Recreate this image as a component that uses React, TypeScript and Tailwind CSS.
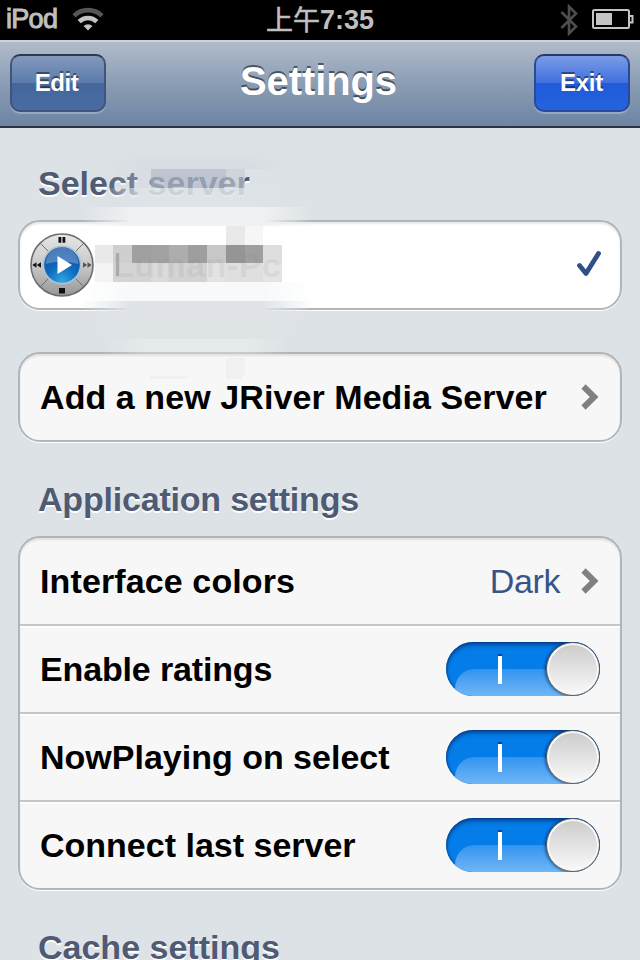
import React from 'react';

interface SettingsRowProps {
  label: string;
  first?: boolean;
  tracking?: string;
  children?: React.ReactNode;
}

const StatusBar: React.FC = () => (
  <div className="grid h-10 grid-cols-3 items-center bg-black text-[27px] leading-none font-bold text-[#bfbfbf]">
    <div className="flex items-center gap-[13px] pb-[2px] pl-[6px]">
      <span className="w-[53px] text-[27px] font-normal tracking-[-0.7px] [-webkit-text-stroke:1px_#bfbfbf]">iPod</span>
      <svg width="32" height="24" viewBox="0 0 32 24">
        <path d="M2 8.8 A20 20 0 0 1 30 8.8" fill="none" stroke="#555" strokeWidth="4.6" />
        <path d="M7.2 14.6 A12.4 12.4 0 0 1 24.8 14.6" fill="none" stroke="#c4c4c4" strokeWidth="4.6" />
        <path d="M11.6 19 A6.6 6.6 0 0 1 20.4 19 L16 23.6Z" fill="#c4c4c4" />
      </svg>
    </div>
    <div className="flex items-center justify-center">
      <span className="mb-[3px] font-['Noto_Sans_CJK_SC',sans-serif] text-[27px] font-normal [-webkit-text-stroke:0.6px_#bfbfbf]">
        上午
      </span>
      <span>7:35</span>
    </div>
    <div className="flex items-center justify-end gap-[14px] pr-[6px]">
      <svg width="18" height="32" viewBox="0 0 18 32">
        <path d="M1.5 8 L16 22.5 L9 29.5 V2.5 L16 9.5 L1.5 24" fill="none" stroke="#4e4e4e" strokeWidth="2.6" />
      </svg>
      <svg className="-mt-[2px]" width="42" height="20" viewBox="0 0 42 20">
        <rect x="1" y="1" width="36" height="18" rx="1.5" fill="none" stroke="#c4c4c4" strokeWidth="2" />
        <rect x="4" y="4" width="16" height="12" fill="#c4c4c4" />
        <path d="M37 7 H40.5 V13.5 H37" fill="none" stroke="#c4c4c4" strokeWidth="2" />
      </svg>
    </div>
  </div>
);

const NavBar: React.FC = () => (
  <div className="flex h-[88px] items-start justify-between border-t-2 border-b-2 border-t-[#cbd3dc] border-b-[#2d3440] bg-gradient-to-b from-[#b0bccb] via-[#8b9db4] to-[#6d84a4] px-[10px] pt-3 text-white">
    <button className="h-[58px] w-24 rounded-[10px] border-2 border-[#40557a] border-t-[#30394b] bg-[linear-gradient(#8299bd_0%,#5c7bab_50%,#44669c_51%,#486ca3_100%)] pr-[3px] text-2xl font-bold tracking-[-0.4px] shadow-[0_2px_0_rgba(255,255,255,0.25)] [text-shadow:0_-2px_0_rgba(0,0,0,0.45)]">
      Edit
    </button>
    <div className="-mt-[2px] text-[40px] leading-[58px] font-bold tracking-[-0.1px] [text-shadow:0_-2px_0_rgba(0,0,0,0.5)]">
      <span className="mr-[3px]">Settings</span>
    </div>
    <button className="h-[58px] w-24 rounded-[10px] border-2 border-[#2b4a96] border-t-[#2b3964] bg-[linear-gradient(#7b9be6_0%,#3f70de_50%,#205ad9_51%,#2463e0_100%)] pr-px text-2xl font-bold tracking-[-0.3px] shadow-[0_2px_0_rgba(255,255,255,0.25)] [text-shadow:0_-2px_0_rgba(0,0,0,0.45)]">
      Exit
    </button>
  </div>
);

const SectionTitle: React.FC<{ className?: string; children: React.ReactNode }> = ({ className = '', children }) => (
  <h2 className={`pl-5 text-[34px] leading-10 font-bold text-[#4f5a73] [text-shadow:0_2px_0_#fff] ${className}`}>
    {children}
  </h2>
);

const Card: React.FC<{ className?: string; children: React.ReactNode }> = ({ className = '', children }) => (
  <div
    className={`overflow-hidden rounded-[22px] border-2 border-[#afb5b9] shadow-[0_1px_0_#fff,inset_0_2px_2px_rgba(0,0,0,0.09)] ${className}`}
  >
    {children}
  </div>
);

const SettingsRow: React.FC<SettingsRowProps> = ({ label, first, tracking = '', children }) => (
  <div
    className={`flex items-center justify-between pr-5 pl-5 text-[34px] leading-10 ${
      first ? 'h-[86px]' : 'h-[88px] border-t-2 border-[#c5c6c7] shadow-[inset_0_2px_0_#fff]'
    }`}
  >
    <span className={`font-bold whitespace-nowrap text-black ${tracking}`}>{label}</span>
    {children}
  </div>
);

const Chevron: React.FC = () => (
  <svg className="mr-px" width="18" height="26" viewBox="0 0 18 26">
    <path d="M2.5 2.5 L13.2 13 L2.5 23.5" fill="none" stroke="#808080" strokeWidth="6" />
  </svg>
);

const Toggle: React.FC = () => (
  <div className="relative h-[54px] w-[154px] overflow-hidden rounded-full bg-[#047de9] shadow-[inset_0_3px_4px_rgba(0,20,80,0.5),inset_0_0_2px_1px_rgba(0,40,120,0.4)]">
    <div className="absolute top-[27px] left-[9px] h-[54px] w-[136px] rounded-[20px] bg-gradient-to-b from-[#3094ee] to-[#6eb6f7] to-50%" />
    <div className="absolute top-[14px] left-[52px] h-[28px] w-1 bg-white shadow-[0_-2px_0_rgba(0,40,110,0.6)]" />
    <div className="absolute top-0 right-0 size-[54px] rounded-full border border-[#5c5c5c] bg-gradient-to-b from-[#cbcbcb] to-[#fafafa] shadow-[-1px_0_3px_rgba(0,30,90,0.7),inset_0_0_0_2px_#f8f8f8]" />
  </div>
);

const ServerIcon: React.FC = () => (
  <svg width="64" height="64" viewBox="0 0 64 64">
    <defs>
      <linearGradient id="ring" x1="0" y1="0" x2="0" y2="1">
        <stop offset="0" stopColor="#e6e6e6" />
        <stop offset="0.5" stopColor="#c9c9c9" />
        <stop offset="1" stopColor="#969696" />
      </linearGradient>
      <radialGradient id="disc" cx="0.5" cy="0.95" r="0.85">
        <stop offset="0" stopColor="#2fa6e6" />
        <stop offset="0.5" stopColor="#0f6cbd" />
        <stop offset="1" stopColor="#1450a0" />
      </radialGradient>
    </defs>
    <circle cx="32" cy="32" r="31" fill="url(#ring)" stroke="#6c6c6c" strokeWidth="1.6" />
    <path d="M10 10 L54 54 M54 10 L10 54" stroke="#6f6f6f" strokeWidth="1" />
    <circle cx="32" cy="32" r="19.5" fill="#a9c5d8" />
    <circle cx="32" cy="32" r="17.8" fill="url(#disc)" />
    <path d="M15.5 31 A16.5 16.5 0 0 1 48.5 31 Q32 26 15.5 31Z" fill="#fff" opacity="0.25" />
    <path d="M27.5 23 L42 32 L27.5 41Z" fill="#fff" />
    <path d="M28.5 4 H31.3 V9.8 H28.5Z M32.5 4 H35.3 V9.8 H32.5Z M29 55 H35 V60.5 H29Z" fill="#111" />
    <path d="M6.5 29.3 V34.7 L2.3 32Z M11 29.3 V34.7 L6.8 32Z" fill="#111" />
    <path d="M53 29.3 V34.7 L57.2 32Z M57.5 29.3 V34.7 L61.7 32Z" fill="#555" />
  </svg>
);

// x, y, width, fill; every block is 19px high
const blocks: [number, number, number, string][] = [
  [226, 226, 19, '#e9e9e9'],
  [245, 226, 18, '#f6f6f6'],
  [95, 245, 18, '#e9e9e9'],
  [113, 245, 19, '#cfcfcf'],
  [132, 245, 19, '#a0a0a0'],
  [151, 245, 18, '#a2a2a2'],
  [169, 245, 19, '#adadad'],
  [188, 245, 19, '#9e9e9e'],
  [207, 245, 19, '#c7c7c7'],
  [226, 245, 19, '#959595'],
  [245, 245, 18, '#9f9f9f'],
  [263, 245, 19, '#dedede'],
  [95, 263, 18, '#f3f3f3'],
  [113, 263, 38, '#d4d4d4'],
  [151, 263, 18, '#dadada'],
  [169, 263, 38, '#d3d3d3'],
  [207, 263, 19, '#e3e3e3'],
  [226, 263, 37, '#dfdfdf'],
  [263, 263, 19, '#e4e4e4'],
];

// Mosaic that hides the server name, with soft strips around it
const NameMosaic: React.FC = () => (
  <svg className="pointer-events-none absolute top-0 left-0" width="340" height="400" viewBox="0 0 340 400">
    <defs>
      <linearGradient id="fade" x1="0" y1="0" x2="1" y2="0">
        <stop offset="0" stopColor="#fff" stopOpacity="0" />
        <stop offset="0.22" stopColor="#fff" />
        <stop offset="0.78" stopColor="#fff" />
        <stop offset="1" stopColor="#fff" stopOpacity="0" />
      </linearGradient>
      <linearGradient id="rise" x1="0" y1="0" x2="0" y2="1">
        <stop offset="0" stopColor="#d2d8e0" stopOpacity="0" />
        <stop offset="1" stopColor="#d2d8e0" stopOpacity="0.6" />
      </linearGradient>
      <mask id="wide">
        <rect x="80" y="140" width="234" height="250" fill="url(#fade)" />
      </mask>
      <mask id="narrow">
        <rect x="100" y="140" width="190" height="250" fill="url(#fade)" />
      </mask>
    </defs>
    <g mask="url(#narrow)">
      <rect x="100" y="150" width="190" height="19" fill="url(#rise)" />
      <rect x="100" y="169" width="51" height="19" fill="#d3d8df" opacity="0.4" />
      <rect x="151" y="169" width="75" height="19" fill="#b2bac7" opacity="0.72" />
      <rect x="226" y="169" width="19" height="19" fill="#c6cdd6" opacity="0.65" />
      <rect x="100" y="188" width="190" height="19" fill="#dfe3e8" opacity="0.88" />
      <rect x="100" y="339" width="190" height="13" fill="#e6eaec" opacity="0.9" />
      <rect x="100" y="352" width="190" height="2" fill="#dfe2e4" opacity="0.45" />
      <rect x="226" y="358" width="19" height="18" fill="#f1f1f1" />
      <rect x="150" y="376" width="38" height="3" fill="#ebebeb" opacity="0.6" />
      <rect x="226" y="376" width="16" height="3" fill="#ebebeb" opacity="0.6" />
    </g>
    <g mask="url(#wide)">
      <rect x="80" y="207" width="234" height="19" fill="#eff1f3" />
      <rect x="90" y="282" width="224" height="19" fill="#f7f9fa" />
      <rect x="80" y="301" width="234" height="19" fill="#dfe3e8" />
      <rect x="80" y="320" width="234" height="19" fill="#dee3e6" />
    </g>
    {blocks.map(([x, y, width, fill]) => (
      <rect key={`${x}-${y}`} x={x} y={y} width={width} height={19} fill={fill} />
    ))}
    <text
      x="113"
      y="277"
      fill="#888"
      fillOpacity="0.13"
      className="font-['Liberation_Sans',sans-serif] text-[34px] font-bold"
      textLength="168"
    >
      Luman-Pc
    </text>
    <path d="M117.5 253 V276" stroke="#aaa" strokeWidth="3" />
  </svg>
);

export default function App() {
  return (
    <div className="relative h-[960px] w-[640px] overflow-hidden bg-[#dde2e6] font-['Liberation_Sans','Noto_Sans_CJK_SC',sans-serif]">
      <StatusBar />
      <NavBar />
      <main className="px-[18px] pt-[35px]">
        <SectionTitle>Select server</SectionTitle>
        <Card className="mt-[17px] bg-white">
          <div className="flex h-[86px] items-center justify-between pr-[18px] pl-[10px]">
            <ServerIcon />
            <svg className="mb-[2px]" width="26" height="28" viewBox="0 0 26 28">
              <path
                d="M3.5 15.5 L10 23.5 L22.5 3.5"
                fill="none"
                stroke="#305088"
                strokeWidth="4.8"
                strokeLinecap="round"
                strokeLinejoin="round"
              />
            </svg>
          </div>
        </Card>
        <Card className="mt-[42px] bg-[#f7f7f7]">
          <SettingsRow first label="Add a new JRiver Media Server" tracking="tracking-[0.08px]">
            <Chevron />
          </SettingsRow>
        </Card>
        <div className="mt-[37px]">
          <SectionTitle className="tracking-[-0.2px]">Application settings</SectionTitle>
        </div>
        <Card className="mt-[17px] bg-[#f7f7f7]">
          <SettingsRow first label="Interface colors" tracking="tracking-[0.12px]">
            <div className="flex items-center gap-[21px]">
              <span className="tracking-[-0.4px] text-[#385487]">Dark</span>
              <Chevron />
            </div>
          </SettingsRow>
          <SettingsRow label="Enable ratings" tracking="tracking-[-0.15px]">
            <Toggle />
          </SettingsRow>
          <SettingsRow label="NowPlaying on select">
            <Toggle />
          </SettingsRow>
          <SettingsRow label="Connect last server">
            <Toggle />
          </SettingsRow>
        </Card>
        <div className="mt-[37px]">
          <SectionTitle>Cache settings</SectionTitle>
        </div>
      </main>
      <NameMosaic />
    </div>
  );
}
